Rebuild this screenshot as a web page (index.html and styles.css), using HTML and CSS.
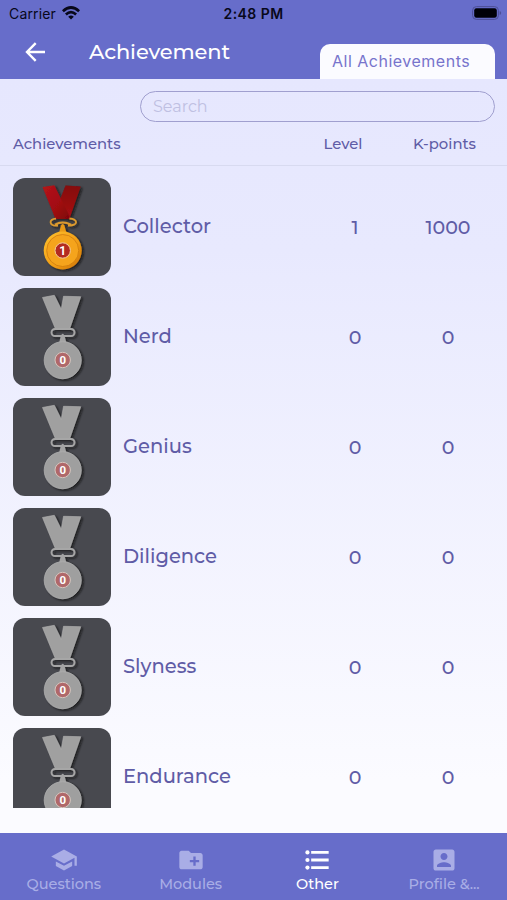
FILE: index.html
```html
<!DOCTYPE html>
<html lang="en">
<head>
<meta charset="utf-8">
<meta name="viewport" content="width=device-width, initial-scale=1">
<title>Achievement</title>
<link rel="stylesheet" href="styles.css">
</head>
<body>
<svg class="defs" width="0" height="0" aria-hidden="true">
  <defs>
    <linearGradient id="red-l" x1="0" y1="0" x2="1" y2="1"><stop offset="0" stop-color="#b5141a"/><stop offset=".6" stop-color="#a00c11"/><stop offset="1" stop-color="#7d0509"/></linearGradient>
    <linearGradient id="red-r" x1="0" y1="0" x2="0" y2="1"><stop offset="0" stop-color="#84080d"/><stop offset="1" stop-color="#a80c13"/></linearGradient>
    <linearGradient id="gold" x1="0" y1="0" x2="1" y2="1"><stop offset="0" stop-color="#ffc230"/><stop offset=".6" stop-color="#f09c14"/><stop offset="1" stop-color="#c97006"/></linearGradient>
    <filter id="shade" x="-30%" y="-30%" width="170%" height="170%"><feDropShadow dx="2" dy="1.5" stdDeviation="1.3" flood-color="#111" flood-opacity=".75"/></filter>
    <symbol id="medal-gold" viewBox="0 0 98 98">
      <g filter="url(#shade)">
        <path d="M48 19 52.500 7.500 67.700 8.500 56.500 40.500 47 39Z" fill="url(#red-r)"/>
        <path d="M29.500 9 41.300 7.300 56.500 38 55.500 41H42.500Z" fill="url(#red-l)"/>
        <path d="M45 47.500C36 48.500 35 41 43 40.700M55 47.500C66 48 65 40.500 56.500 40.700M42 46.500Q49.500 42.500 58 46.500" fill="none" stroke="#dc9a2d" stroke-width="1.800"/>
        <path d="M46 55 48 47.500Q49.700 44.500 51.400 47.500L53.500 55Z" fill="#e99a17"/>
        <circle cx="49.700" cy="72.500" r="19" fill="url(#gold)"/>
        <circle cx="49.700" cy="72.500" r="16" fill="#f5a41b" stroke="#cf7b0f" stroke-width=".8"/>
      </g>
      <circle cx="49.700" cy="72.500" r="7.700" fill="#b32b20" stroke="#f3cf9c" stroke-width="1"/>
      <text class="digit" x="49.700" y="76.800">1</text>
    </symbol>
    <symbol id="medal-gray" viewBox="0 0 98 98">
      <g filter="url(#shade)">
        <path d="M29.500 9.500 41.300 7.300 48.300 21.500 50.500 8.300 67.700 8.700 56.500 41H42.500Z" fill="#a0a0a0" stroke="#b4b4b4" stroke-width=".6"/>
        <rect x="38.500" y="41" width="23" height="7" rx="3.500" fill="none" stroke="#a6a6a6" stroke-width="1.900"/>
        <path d="M46 55 48 47.500Q49.700 44 51.400 47.500L53.500 55Z" fill="#a4a4a4"/>
        <circle cx="49.700" cy="72.200" r="18.500" fill="#9f9f9f" stroke="#afafaf" stroke-width=".8"/>
      </g>
      <circle cx="49.700" cy="72" r="7.700" fill="#b0686a" stroke="#d6c8c0" stroke-width="1"/>
      <text class="digit zero" x="49.700" y="76.200">0</text>
    </symbol>
  </defs>
</svg>
<div class="app">
  <header class="header">
    <div class="status">
      <div class="carrier"><span>Carrier</span>
        <svg width="18" height="14" viewBox="0 0 18 14" fill="none" stroke="#08081a" stroke-width="2.700"><path d="M.9 5.200Q9-2.200 17.100 5.200M3.900 8.400Q9 3.800 14.100 8.400"/><path d="M6.200 10.700Q9 8.400 11.800 10.700L9 13.600Z" fill="#08081a" stroke="none"/></svg>
      </div>
      <div class="clock">2:48 PM</div>
      <svg class="battery" width="30" height="14" viewBox="0 0 30 14"><rect x=".6" y=".6" width="25.800" height="12.800" rx="3.800" fill="none" stroke="#4d4f97" stroke-width="1"/><rect x="2.200" y="2.200" width="22.600" height="9.600" rx="2.200" fill="#000008"/><path d="M27.700 5v4q1.500-.7 1.500-2t-1.500-2" fill="#4d4f97"/></svg>
    </div>
    <div class="titlebar">
      <svg class="back" width="22" height="20" viewBox="0 0 22 20" fill="none" stroke="#fff" stroke-width="2.400"><path d="M20 10H2.500M10.700 1.200 2 10l8.700 8.800"/></svg>
      <h1 class="title">Achievement</h1>
      <div class="tab">All Achievements</div>
    </div>
  </header>
  <main class="content">
    <div class="search">Search</div>
    <div class="columns"><span>Achievements</span><span class="col-level">Level</span><span class="col-points">K-points</span></div>
    <div class="list">
      <div class="row"><svg class="tile"><use href="#medal-gold"/></svg><span class="name">Collector</span><span class="level">1</span><span class="points">1000</span></div>
      <div class="row"><svg class="tile"><use href="#medal-gray"/></svg><span class="name">Nerd</span><span class="level">0</span><span class="points">0</span></div>
      <div class="row"><svg class="tile"><use href="#medal-gray"/></svg><span class="name">Genius</span><span class="level">0</span><span class="points">0</span></div>
      <div class="row"><svg class="tile"><use href="#medal-gray"/></svg><span class="name">Diligence</span><span class="level">0</span><span class="points">0</span></div>
      <div class="row"><svg class="tile"><use href="#medal-gray"/></svg><span class="name">Slyness</span><span class="level">0</span><span class="points">0</span></div>
      <div class="row"><svg class="tile"><use href="#medal-gray"/></svg><span class="name">Endurance</span><span class="level">0</span><span class="points">0</span></div>
    </div>
  </main>
  <nav class="nav">
    <div class="item"><svg viewBox="0 0 24 24"><path d="M5 13.180v4L12 21l7-3.820v-4L12 17zM12 3 1 9l11 6 9-4.910V17h2V9z"/></svg><span>Questions</span></div>
    <div class="item"><svg viewBox="0 0 24 24"><path d="M20 6h-8l-2-2H4C2.890 4 2 4.890 2 6v12c0 1.110.890 2 2 2h16c1.110 0 2-.890 2-2V8c0-1.110-.890-2-2-2zm-1 8h-3v3h-2v-3h-3v-2h3V9h2v3h3z"/></svg><span>Modules</span></div>
    <div class="item active"><svg viewBox="0 0 24 24"><circle cx="3.800" cy="5.500" r="1.800"/><circle cx="3.800" cy="12" r="1.800"/><circle cx="3.800" cy="18.500" r="1.800"/><path d="M7 4.300h15v2.400H7zM7 10.800h15v2.400H7zM7 17.300h15v2.400H7z"/></svg><span>Other</span></div>
    <div class="item"><svg viewBox="0 0 24 24"><path d="M3 5v14c0 1.100.890 2 2 2h14c1.100 0 2-.900 2-2V5c0-1.100-.900-2-2-2H5c-1.110 0-2 .900-2 2zm12 4c0 1.660-1.340 3-3 3s-3-1.340-3-3 1.340-3 3-3 3 1.340 3 3zm-9 8c0-2 4-3.100 6-3.100s6 1.100 6 3.100v1H6z"/></svg><span>Profile &amp;...</span></div>
  </nav>
</div>
</body>
</html>
```
FILE: styles.css
```css
* { box-sizing: border-box; }
body { margin: 0; font-family: Montserrat, Inter, sans-serif; color: #5f5ca6; }
.defs { position: absolute; }
.app { width: 507px; height: 900px; display: flex; flex-direction: column; overflow: hidden; background: linear-gradient(#e6e7fe 79px, #e8e9fe 250px, #fbfbff 780px); }
.header { height: 79px; background: #676dca; display: flex; flex-direction: column; }
.status { height: 27px; display: grid; grid-template-columns: 1fr auto 1fr; align-items: center; padding: 0 5px 0 9px; color: #08081a; font: 14px/20px Inter, sans-serif; }
.carrier { display: flex; align-items: center; gap: 6px; letter-spacing: 0.15px; }
.carrier svg { margin-bottom: 2px; }
.clock { font-weight: 600; letter-spacing: 0.45px; margin-left: -4px; }
.battery { justify-self: end; margin-top: -1px; }
.titlebar { height: 52px; display: flex; padding: 0 12px 0 25px; }
.back { margin-top: 15px; }
.title { margin: 10px 0 0 42px; font-size: 21px; line-height: 30px; font-weight: 500; letter-spacing: -0.1px; color: #fff; }
.tab { margin: 17px 0 0 auto; width: 175px; height: 35px; border-radius: 10px 10px 0 0; background: #fbfbff; color: #7774cc; padding-left: 12px; font: 16px/35px Inter, sans-serif; letter-spacing: 0.5px; white-space: nowrap; }
.content { height: 754px; }
.search { margin: 12px 12px 0 140px; height: 31px; border: 1px solid #a09fcf; border-radius: 16px; padding-left: 12px; font-size: 16px; line-height: 29px; color: #bfc0e2; }
.columns { height: 44px; border-bottom: 1px solid #d8daf0; display: grid; grid-template-columns: 290px 80px 112px; padding-left: 13px; font-size: 14.8px; line-height: 44px; font-weight: 500; }
.col-level { text-align: center; }
.col-points { text-align: center; padding-left: 11px; }
.list { height: 642px; padding-top: 12px; overflow: hidden; }
.row { height: 98px; margin-bottom: 12px; padding-left: 13px; display: grid; grid-template-columns: 98px 189px 110px 76px; align-items: center; font-size: 19.5px; line-height: 24px; font-weight: 500; }
.tile { display: block; width: 98px; height: 98px; border-radius: 12px; background: #48494f; }
.digit { font: 700 12px "Roboto", sans-serif; fill: #fff; text-anchor: middle; }
.zero { font-size: 11.5px; }
.name { padding-left: 12px; margin-top: -2px; }
.level, .points { text-align: center; padding-top: 1px; font-size: 19px; }
.nav { height: 67px; background: #676dca; display: grid; grid-template-columns: repeat(4, 1fr); color: #a9ade6; }
.item { display: flex; flex-direction: column; align-items: center; padding: 13px 0 0 1px; font-size: 14.5px; line-height: 20px; font-weight: 500; }
.item svg { width: 28px; height: 28px; fill: currentColor; }
.active { color: #fff; }
```
